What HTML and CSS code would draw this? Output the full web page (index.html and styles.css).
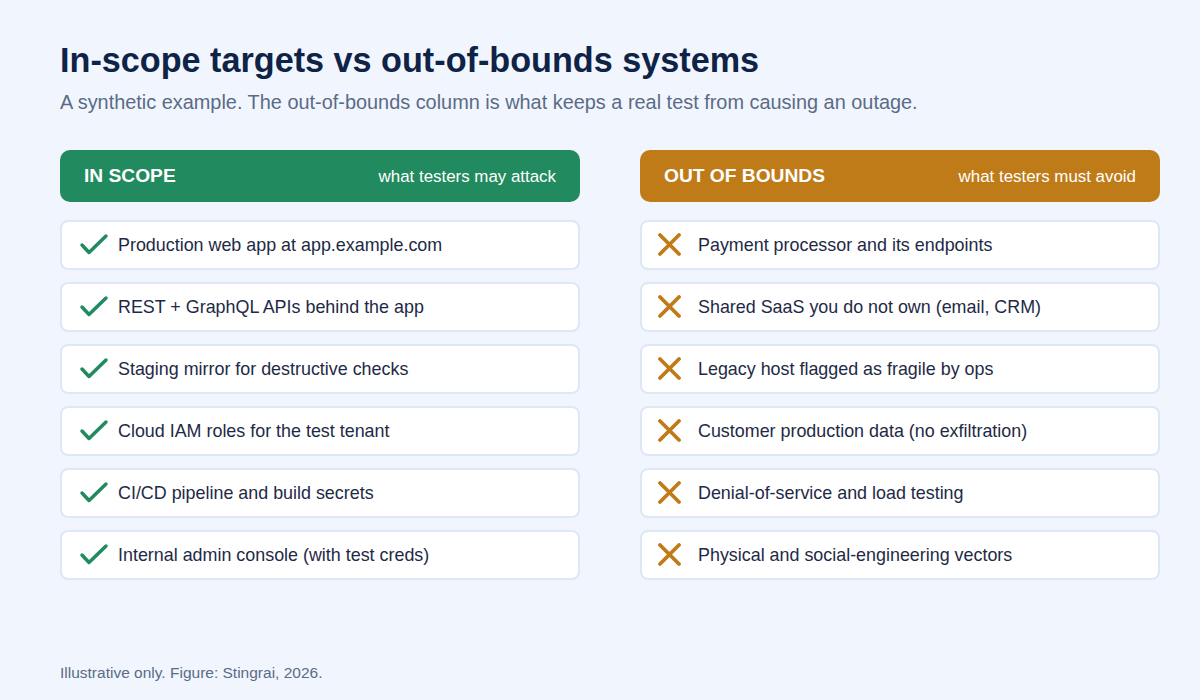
FILE: index.html
```html
<!DOCTYPE html>
<html lang="en">
<head>
<meta charset="utf-8">
<title>In-scope targets vs out-of-bounds systems</title>
<link rel="stylesheet" href="styles.css">
</head>
<body>
<main class="page">
  <header class="intro">
    <h1 class="title">In-scope targets vs out-of-bounds systems</h1>
    <p class="subtitle">A synthetic example. The out-of-bounds column is what keeps a real test from causing an outage.</p>
  </header>
  <section class="columns">
    <div class="column">
      <div class="col-head col-head--in">
        <span class="col-label">IN SCOPE</span>
        <span class="col-note">what testers may attack</span>
      </div>
      <ul class="list">
        <li class="item"><svg class="icon" viewBox="0 0 30 24"><polyline points="3,12 10,19.5 27,3" class="check"/></svg><span>Production web app at app.example.com</span></li>
        <li class="item"><svg class="icon" viewBox="0 0 30 24"><polyline points="3,12 10,19.5 27,3" class="check"/></svg><span>REST + GraphQL APIs behind the app</span></li>
        <li class="item"><svg class="icon" viewBox="0 0 30 24"><polyline points="3,12 10,19.5 27,3" class="check"/></svg><span>Staging mirror for destructive checks</span></li>
        <li class="item"><svg class="icon" viewBox="0 0 30 24"><polyline points="3,12 10,19.5 27,3" class="check"/></svg><span>Cloud IAM roles for the test tenant</span></li>
        <li class="item"><svg class="icon" viewBox="0 0 30 24"><polyline points="3,12 10,19.5 27,3" class="check"/></svg><span>CI/CD pipeline and build secrets</span></li>
        <li class="item"><svg class="icon" viewBox="0 0 30 24"><polyline points="3,12 10,19.5 27,3" class="check"/></svg><span>Internal admin console (with test creds)</span></li>
      </ul>
    </div>
    <div class="column">
      <div class="col-head col-head--out">
        <span class="col-label">OUT OF BOUNDS</span>
        <span class="col-note">what testers must avoid</span>
      </div>
      <ul class="list">
        <li class="item item--out"><svg class="icon" viewBox="0 0 30 24"><path d="M3 2 L22 21 M22 2 L3 21" class="cross"/></svg><span>Payment processor and its endpoints</span></li>
        <li class="item item--out"><svg class="icon" viewBox="0 0 30 24"><path d="M3 2 L22 21 M22 2 L3 21" class="cross"/></svg><span>Shared SaaS you do not own (email, CRM)</span></li>
        <li class="item item--out"><svg class="icon" viewBox="0 0 30 24"><path d="M3 2 L22 21 M22 2 L3 21" class="cross"/></svg><span>Legacy host flagged as fragile by ops</span></li>
        <li class="item item--out"><svg class="icon" viewBox="0 0 30 24"><path d="M3 2 L22 21 M22 2 L3 21" class="cross"/></svg><span>Customer production data (no exfiltration)</span></li>
        <li class="item item--out"><svg class="icon" viewBox="0 0 30 24"><path d="M3 2 L22 21 M22 2 L3 21" class="cross"/></svg><span>Denial-of-service and load testing</span></li>
        <li class="item item--out"><svg class="icon" viewBox="0 0 30 24"><path d="M3 2 L22 21 M22 2 L3 21" class="cross"/></svg><span>Physical and social-engineering vectors</span></li>
      </ul>
    </div>
  </section>
  <footer class="foot">Illustrative only. Figure: Stingrai, 2026.</footer>
</main>
</body>
</html>
```
FILE: styles.css
```css
* { box-sizing: border-box; }
html, body {
  margin: 0;
  padding: 0;
  background: #f1f6fe;
}
body {
  font-family: "Liberation Sans", Arial, sans-serif;
  width: 1200px;
  height: 700px;
  overflow: hidden;
}
.page {
  padding: 39px 60px 0 60px;
  height: 700px;
  display: flex;
  flex-direction: column;
}
.title {
  margin: 0;
  font-size: 34.2px;
  line-height: 42px;
  font-weight: 700;
  color: #0f2347;
}
.subtitle {
  margin: 9px 0 0 0;
  font-size: 19.9px;
  line-height: 24px;
  color: #5b6b86;
}
.columns {
  margin-top: 36px;
  display: grid;
  grid-template-columns: 520px 520px;
  column-gap: 60px;
}
.col-head {
  height: 52px;
  border-radius: 10px;
  display: flex;
  align-items: center;
  justify-content: space-between;
  padding: 0 24px;
  color: #ffffff;
}
.col-head--in { background: #218a5e; }
.col-head--out { background: #c07b19; }
.col-label {
  font-size: 19.2px;
  font-weight: 700;
}
.col-note {
  font-size: 16.9px;
  padding-top: 2px;
}
.list {
  list-style: none;
  margin: 18px 0 0 0;
  padding: 0;
  display: flex;
  flex-direction: column;
  gap: 12px;
}
.item {
  height: 50px;
  background: #ffffff;
  border: 2px solid #dde7f6;
  border-radius: 8px;
  display: flex;
  align-items: center;
  padding-left: 17px;
  font-size: 17.9px;
  color: #1e2a45;
}
.icon {
  width: 30px;
  height: 24px;
  flex: none;
  margin-right: 9px;
}
.item--out .icon { margin-left: -2px; margin-right: 11px; }
.check {
  fill: none;
  stroke: #218a5e;
  stroke-width: 3.5;
  stroke-linecap: round;
  stroke-linejoin: round;
}
.cross {
  fill: none;
  stroke: #c07b19;
  stroke-width: 3.8;
  stroke-linecap: round;
}
.foot {
  margin-top: auto;
  margin-bottom: 18px;
  font-size: 15.5px;
  color: #5b6b86;
}
```
